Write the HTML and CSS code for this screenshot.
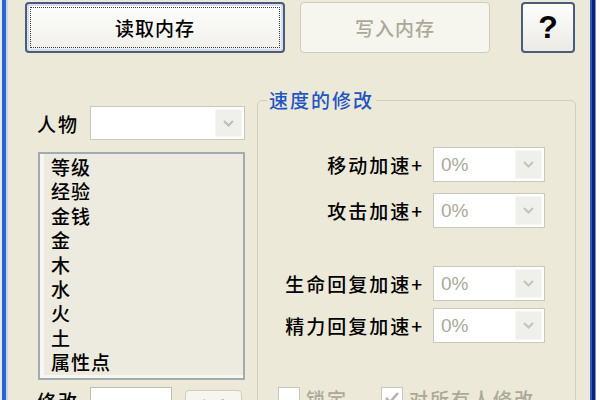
FILE: index.html
```html
<!DOCTYPE html>
<html lang="zh-CN">
<head>
<meta charset="utf-8">
<title>内存修改</title>
<link rel="stylesheet" href="styles.css">
</head>
<body>
<div class="window">
  <div class="frame-left"></div>
  <div class="content">
    <div class="toolbar">
      <button class="btn btn-read">读取内存</button>
      <button class="btn btn-write" disabled>写入内存</button>
      <button class="btn btn-help">?</button>
    </div>
    <div class="main">
      <div class="left">
        <div class="field-row">
          <span class="lbl">人物</span>
          <div class="combo combo-person">
            <span class="val"></span>
            <span class="drop"><svg width="11" height="7" viewBox="0 0 11 7"><polyline points="1,1 5.5,5.5 10,1" fill="none" stroke="#bdbdb6" stroke-width="2"/></svg></span>
          </div>
        </div>
        <ul class="listbox">
          <li>等级</li>
          <li>经验</li>
          <li>金钱</li>
          <li>金</li>
          <li>木</li>
          <li>水</li>
          <li>火</li>
          <li>土</li>
          <li>属性点</li>
        </ul>
        <div class="field-row modify-row">
          <span class="lbl">修改</span>
          <div class="textbox"></div>
          <button class="btn btn-small">确定</button>
        </div>
      </div>
      <fieldset class="group">
        <legend>速度的修改</legend>
        <div class="speed-row r1">
          <span class="lbl-r">移动加速+</span>
          <div class="combo combo-speed">
            <span class="val">0%</span>
            <span class="drop"><svg width="11" height="7" viewBox="0 0 11 7"><polyline points="1,1 5.5,5.5 10,1" fill="none" stroke="#c4c4bd" stroke-width="2"/></svg></span>
          </div>
        </div>
        <div class="speed-row r2">
          <span class="lbl-r">攻击加速+</span>
          <div class="combo combo-speed">
            <span class="val">0%</span>
            <span class="drop"><svg width="11" height="7" viewBox="0 0 11 7"><polyline points="1,1 5.5,5.5 10,1" fill="none" stroke="#c4c4bd" stroke-width="2"/></svg></span>
          </div>
        </div>
        <div class="speed-row r3">
          <span class="lbl-r">生命回复加速+</span>
          <div class="combo combo-speed">
            <span class="val">0%</span>
            <span class="drop"><svg width="11" height="7" viewBox="0 0 11 7"><polyline points="1,1 5.5,5.5 10,1" fill="none" stroke="#c4c4bd" stroke-width="2"/></svg></span>
          </div>
        </div>
        <div class="speed-row r4">
          <span class="lbl-r">精力回复加速+</span>
          <div class="combo combo-speed">
            <span class="val">0%</span>
            <span class="drop"><svg width="11" height="7" viewBox="0 0 11 7"><polyline points="1,1 5.5,5.5 10,1" fill="none" stroke="#c4c4bd" stroke-width="2"/></svg></span>
          </div>
        </div>
        <div class="check-row">
          <span class="check"></span>
          <span class="check-label">锁定</span>
          <span class="check check-2"><svg width="20" height="20" viewBox="0 0 20 20"><polyline points="4,10 8,14 16,5" fill="none" stroke="#b5b3a8" stroke-width="2.5"/></svg></span>
          <span class="check-label">对所有人修改</span>
        </div>
      </fieldset>
    </div>
  </div>
  <div class="frame-right"></div>
</div>
</body>
</html>
```

FILE: styles.css
```css
* { box-sizing: border-box; }

body {
  margin: 0;
  width: 600px;
  height: 400px;
  overflow: hidden;
  font-family: "Noto Sans CJK SC", "Noto Sans", sans-serif;
  font-weight: 500;
  color: #000;
}

.window {
  display: flex;
  height: 400px;
}

.frame-left {
  width: 8px;
  background: linear-gradient(to right, #e3ebf7 0 2px, #2f62cc 2px 6px, #c5d4ee 6px 8px);
}

.frame-right {
  width: 10px;
  background: linear-gradient(to right, #3557b8 0 2px, #0d1f7a 2px 5px, #7a90cc 5px 6px, #ffffff 6px);
}

.content {
  flex: 1;
  background: #ECE9D8;
  overflow: hidden;
}

/* top buttons */
.toolbar {
  display: flex;
  margin: 2px 0 0 17px;
  height: 51px;
}

.btn {
  font-family: inherit;
  font-weight: 500;
  font-size: 19px;
  letter-spacing: 1px;
  border-radius: 4px;
  display: flex;
  align-items: center;
  justify-content: center;
  padding: 0;
  color: #000;
}

.btn-read {
  width: 260px;
  border: 2px solid #4b5b7c;
  background: linear-gradient(#fdfdfc, #f1f0ea);
  box-shadow: inset 0 0 0 2px #d5dff0;
  outline: 1px dotted #3a3a3a;
  outline-offset: -6px;
}

.btn-write {
  width: 190px;
  margin-left: 15px;
  border: 1px solid #cfcdc0;
  background: #f6f5ee;
  color: #aca899;
}

.btn-help {
  width: 54px;
  margin-left: 31px;
  border: 2px solid #4b5b7c;
  background: linear-gradient(#fdfdfc, #ebeae4);
  font-family: "Liberation Sans", sans-serif;
  font-weight: bold;
  font-size: 32px;
  letter-spacing: 0;
}

/* main area */
.main {
  display: flex;
  align-items: flex-start;
}

.left {
  margin: 53px 0 0 29px;
  width: 208px;
}

.field-row {
  display: flex;
  align-items: center;
  height: 34px;
}

.lbl {
  width: 53px;
  font-size: 19px;
  letter-spacing: 2px;
}

.combo {
  display: flex;
  border: 1px solid #cbc8bb;
  background: #fff;
  padding: 2px;
}

.combo-person {
  width: 155px;
  height: 34px;
}

.val {
  flex: 1;
  display: flex;
  align-items: center;
  padding-left: 5px;
  font-family: "Liberation Sans", sans-serif;
  font-weight: normal;
  font-size: 19px;
  color: #aca899;
}

.drop {
  width: 27px;
  background: #efefeb;
  border: 1px solid #f6f6f3;
  display: flex;
  align-items: center;
  justify-content: center;
}

.listbox {
  list-style: none;
  margin: 12px 0 0 1px;
  width: 207px;
  height: 228px;
  padding: 1px 0 0 11px;
  border: 2px solid #a2aab3;
  background: #edeadf;
  box-shadow: inset 4px -3px 0 #f7f6f1;
  font-size: 19px;
  line-height: 24.4px;
  letter-spacing: 1px;
}

.modify-row {
  margin-top: 7px;
  align-items: flex-start;
}

.textbox {
  width: 82px;
  height: 34px;
  border: 1px solid #c0bdb0;
  background: #fff;
}

.btn-small {
  width: 57px;
  height: 34px;
  margin: 3px 0 0 13px;
  border: 1px solid #cfcdc0;
  background: #f6f5ee;
  color: #aca899;
}

/* group box */
.group {
  margin: 37px 0 0 12px;
  width: 319px;
  height: 340px;
  min-width: 0;
  border: 1px solid #d0d0bf;
  border-radius: 5px;
  padding: 0;
}

.group legend {
  margin-left: 9px;
  padding: 0 2px;
  font-size: 19px;
  line-height: 20px;
  letter-spacing: 2px;
  color: #1f55c4;
}

.speed-row {
  display: flex;
  align-items: center;
  height: 35px;
}

.r1 { margin-top: 37px; }
.r2 { margin-top: 11px; }
.r3 { margin-top: 38px; }
.r4 { margin-top: 7px; }

.lbl-r {
  width: 166px;
  text-align: right;
  font-size: 19px;
  letter-spacing: 2px;
}

.combo-speed {
  width: 112px;
  height: 35px;
  margin-left: 9px;
}

.check-row {
  display: flex;
  align-items: center;
  margin-top: 44px;
  padding-left: 20px;
  height: 22px;
}

.check {
  width: 22px;
  height: 22px;
  border: 1px solid #c9c7ba;
  background: #fff;
  display: flex;
  align-items: center;
  justify-content: center;
}

.check-2 {
  margin-left: 33px;
}

.check-label {
  margin-left: 6px;
  font-size: 19px;
  letter-spacing: 2px;
  color: #aca899;
}
```
